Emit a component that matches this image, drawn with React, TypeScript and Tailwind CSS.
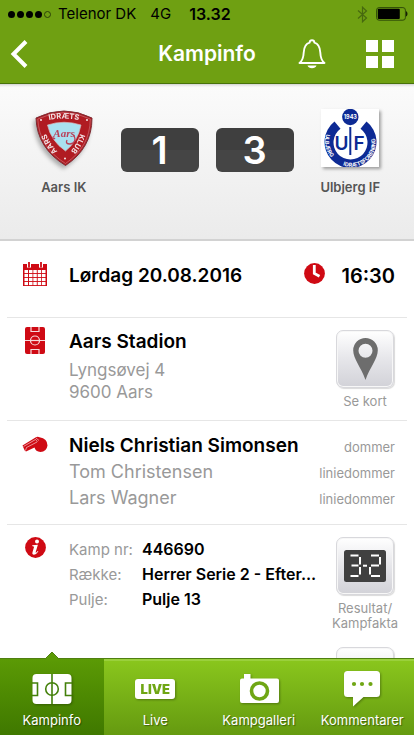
import type { ReactNode } from "react";

const red = "#cf0a14";

function BackIcon() {
  return (
    <svg width="18" height="28" viewBox="0 0 18 28" fill="none" stroke="#fff" strokeWidth="4">
      <path d="M16 1.500 3.500 14 16 26.500" />
    </svg>
  );
}

function BellIcon() {
  return (
    <svg width="28" height="30" viewBox="0 0 28 30" fill="none">
      <path
        d="M1.500 24C4.800 21.500 5.500 18 5.700 13.500C6 8 7.500 4.700 11.600 3.600C11.700 2.200 12.500 1.300 14 1.300s2.300.9 2.400 2.300c4.100 1.100 5.600 4.400 5.900 9.900.2 4.500.9 8 4.200 10.500z"
        stroke="#fff"
        strokeWidth="1.900"
        strokeLinejoin="round"
      />
      <path d="M9.500 26.600h9c-.6 1.800-2.300 2.700-4.500 2.700s-3.900-.9-4.500-2.700z" fill="#fff" />
    </svg>
  );
}

function GridIcon() {
  return (
    <svg width="28" height="28" viewBox="0 0 28 28" fill="#fff">
      <path d="M0 0h12v12H0zM16 0h12v12H16zM0 16h12v12H0zM16 16h12v12H16z" />
    </svg>
  );
}

function BluetoothIcon() {
  return (
    <svg width="11" height="17" viewBox="0 0 11 17" fill="none" stroke="#47690f" strokeWidth="1.200">
      <path d="M1 4.500 9.500 12 5.500 15.800V1.200L9.500 5 1 12.500" />
    </svg>
  );
}

function BatteryIcon() {
  return (
    <svg width="32" height="14" viewBox="0 0 32 14">
      <rect x=".6" y=".6" width="28.800" height="12.600" rx="2.500" fill="none" stroke="#2f4a08" />
      <rect x="1.800" y="1.800" width="22" height="10.200" rx="1" fill="#000" />
      <path d="M30.200 4.300c1.600.6 1.600 4.600 0 5.200z" fill="#000" />
    </svg>
  );
}

function AarsLogo() {
  return (
    <svg
      className="drop-shadow-[-2px_3px_2px_rgba(0,0,0,0.3)]"
      width="60"
      height="60"
      viewBox="0 0 60 60"
      role="img"
      aria-label="Aars IK"
    >
      <defs>
        <path id="aars-top" d="M9 13.500Q30 7.500 51 13.500" />
        <path id="aars-left" d="M27.500 47Q14 36 9.500 18" />
        <path id="aars-right" d="M48 18Q45 37 31 48.500" />
      </defs>
      <path d="M2 10Q30-4 58 10Q58 40 31.500 57.500Q3 40 2 10z" fill="#b01b22" stroke="#7d2c33" />
      <path d="M3.800 11Q30-1.800 56.300 11Q56 39 31.500 55.500Q5 39 3.800 11z" fill="none" stroke="#cf7d84" strokeWidth=".6" />
      <path d="M13.500 17Q30 11.500 47 17Q44 33 31.500 43Q17 33 13.500 17z" fill="#a9e0f0" stroke="#d5bcc0" strokeWidth=".7" />
      <g className="font-['Inter',sans-serif] font-bold" fill="#f2e2e4" fontSize="7.500">
        <text textAnchor="middle"><textPath href="#aars-top" startOffset="50%">IDRÆTS</textPath></text>
        <text textAnchor="middle"><textPath href="#aars-left" startOffset="46%">AARS</textPath></text>
        <text textAnchor="middle"><textPath href="#aars-right" startOffset="50%">KLUB</textPath></text>
      </g>
      <text x="30" y="29" textAnchor="middle" fontSize="11" fill="#b9425a" fontWeight="bold" className="font-['Liberation_Serif',serif] italic">
        Aars
      </text>
      <path d="M40 27q3 8-4 9-5 0-3-4M21 30q-2 2-2-1" fill="none" stroke="#b9425a" strokeWidth="1.300" />
      <g fill="#fff"><circle cx="7" cy="12" r=".9" /><circle cx="53" cy="12" r=".9" /><circle cx="31" cy="50.500" r=".9" /></g>
    </svg>
  );
}

function UlbjergLogo() {
  return (
    <svg
      className="bg-white shadow-[2px_2px_3px_rgba(0,0,0,0.35)]"
      width="58"
      height="58"
      viewBox="0 0 58 58"
      role="img"
      aria-label="Ulbjerg IF"
    >
      <defs>
        <path id="uif-left" d="M10.500 16A24.300 24.300 0 0 0 15.500 53" />
        <path id="uif-right" d="M18 54.500A24.300 24.300 0 0 0 53 25" />
      </defs>
      <path d="M13.500 12.500l6 7.300a17 17 0 1 0 20 0l6-7.300A26 26 0 1 1 13.500 12.500z" fill="#0d2a94" />
      <circle cx="29.300" cy="8" r="8.200" fill="#0d2a94" />
      <text x="29.300" y="10" textAnchor="middle" fontSize="5.500" fontWeight="bold" fill="#fff" className="font-['Inter',sans-serif]">
        1943
      </text>
      <g className="font-['Inter',sans-serif] font-bold" fill="#fff" fontSize="5.500">
        <text textAnchor="middle"><textPath href="#uif-left" startOffset="54%">ULBJERG</textPath></text>
        <text textAnchor="middle"><textPath href="#uif-right" startOffset="50%">IDRÆTSFORENING</textPath></text>
      </g>
      <g className="font-['Inter',sans-serif] font-semibold" fill="#0d2a94" fontSize="19" textAnchor="middle">
        <text x="20.500" y="41">U</text>
        <text x="38" y="41">F</text>
      </g>
      <path d="M29.300 18v28" stroke="#0d2a94" strokeWidth="2" />
    </svg>
  );
}

function CalendarIcon() {
  return (
    <svg width="24" height="24" viewBox="0 0 24 24">
      <path d="M0 2h24v22H0z" fill={red} />
      <g fill="#fff">
        {[8, 12, 16, 20].map((y) =>
          [1.5, 6, 10.3, 14.7, 19].map((x) => <rect key={`${x}-${y}`} x={x} y={y} width="3.500" height="3.100" />),
        )}
        <rect x="4" y="0" width="4" height="6" rx="1.500" />
        <rect x="16" y="0" width="4" height="6" rx="1.500" />
      </g>
      <path d="M6 .5v4.500M18 .5v4.500" stroke={red} strokeWidth="1.800" strokeLinecap="round" />
    </svg>
  );
}

function ClockIcon() {
  return (
    <svg width="21" height="21" viewBox="0 0 21 21">
      <circle cx="10.500" cy="10.500" r="10.400" fill={red} />
      <path d="M10.300 2v8.500l5.200 2.800" fill="none" stroke="#fff" strokeWidth="2.800" />
    </svg>
  );
}

function PitchIcon() {
  return (
    <svg width="20" height="27" viewBox="0 0 20 27">
      <rect width="20" height="27" rx="2" fill={red} />
      <g fill="none" stroke="#fff" strokeWidth="1.200" opacity=".85">
        <path d="M0 13.500h5.500M14.500 13.500H20M6 0v4.500h8V0M6 27v-4.500h8V27" />
        <circle cx="10" cy="13.500" r="4.500" />
        <path d="M5.500 13.500h9" />
      </g>
    </svg>
  );
}

function WhistleIcon() {
  return (
    <svg width="26" height="17" viewBox="0 0 26 17">
      <path
        d="M.5 9.500 13.500 1.500Q15.500.3 17.500 1.200Q25.500 2.500 25.500 9.500Q24.500 16 18.500 16Q13.500 15.500 12.500 11.500L4 15.500 2.700 14.500z"
        fill={red}
      />
      <path d="M1.500 10.500 13.500 3.500l2 2.300M3.500 14.500l1-3L15 6M14 2l3 2.500" fill="none" stroke="#fff" strokeWidth=".7" opacity=".8" />
    </svg>
  );
}

function InfoIcon() {
  return (
    <svg width="21" height="21" viewBox="0 0 21 21">
      <circle cx="10.500" cy="10.500" r="10.400" fill={red} />
      <circle cx="12" cy="4.500" r="2" fill="#fff" />
      <path d="M7.300 8.300l5.600-.6-2.200 7.200q-.2 1.100.6.600l1.500-1.400.6.500q-2.300 3.200-4.400 3.200-2.200-.2-1.500-2.600l1.600-5.500-1.900-.6z" fill="#fff" />
    </svg>
  );
}

function PinIcon() {
  return (
    <svg width="25" height="42" viewBox="0 0 25 42">
      <path
        fillRule="evenodd"
        d="M12.500 0A12.300 12.300 0 0 1 24.800 12.300C24.800 21 17 29 12.500 42 8 29 .2 21 .2 12.300A12.300 12.300 0 0 1 12.500 0zm0 5.700a7 7 0 1 0 0 14 7 7 0 0 0 0-14z"
        fill="#6d6d6d"
      />
    </svg>
  );
}

function ResultIcon() {
  return (
    <svg width="42" height="32" viewBox="0 0 42 32">
      <rect width="42" height="32" rx="2.500" fill="#404040" />
      <g fill="none" stroke="#fff" strokeWidth="2">
        <path d="M6.500 5.500h8M7.500 15.500h7M6.500 26h8M16 7v7.500M16 17v7.500" />
        <path d="M27 5.500h8M27 15.500h8M27 26h9M36 7v7.500M26 17v7.500" />
        <path d="M19 15.700h4" />
      </g>
    </svg>
  );
}

function TabPitchIcon() {
  return (
    <svg width="40" height="30" viewBox="0 0 40 30">
      <rect x=".5" width="39" height="30" rx="4" fill="#fff" />
      <g fill="none" stroke="#43800a" strokeWidth="1.600">
        <path d="M20 0v30M0 9h5.500v12.500H0M40 9h-6.500v12.500H40" />
        <circle cx="20" cy="15" r="6.300" />
      </g>
    </svg>
  );
}

function LiveIcon() {
  return (
    <span className="flex h-5 w-10 items-center justify-center rounded-[3px] bg-white text-[13px] leading-none font-black text-[#6fa614] text-shadow-none">
      LIVE
    </span>
  );
}

function CameraIcon() {
  return (
    <svg width="40" height="30" viewBox="0 0 40 30">
      <path d="M5 0h6.500v4.500H38q2 0 2 2V27q0 2-2 2H3q-2 0-2-2V6.500q0-2 2-2h2z" fill="#fff" />
      <circle cx="20.500" cy="17" r="8" fill="none" stroke="#6fa614" strokeWidth="3.600" />
    </svg>
  );
}

function CommentIcon() {
  return (
    <svg width="36" height="36" viewBox="0 0 36 36">
      <path d="M3.500 0h29Q36 0 36 3.500v19Q36 26 32.500 26H19.500L9 35.500V26H3.500Q0 26 0 22.500v-19Q0 0 3.500 0z" fill="#fff" />
      <g fill="#6fa614"><circle cx="10" cy="13" r="2.100" /><circle cx="18" cy="13" r="2.100" /><circle cx="26.500" cy="13" r="2.100" /></g>
    </svg>
  );
}

function Score({ value }: { value: number }) {
  return (
    <div className="mt-[31px] flex h-11 w-[78px] items-center justify-center rounded-md bg-linear-to-b from-[#3f3f3f] from-50% to-[#454545] to-50% text-[38px] font-semibold text-white">
      {value}
    </div>
  );
}

function Team({ name, children }: { name: string; children: ReactNode }) {
  return (
    <div className="flex flex-1 flex-col items-center pt-[11px]">
      <div className="flex h-[60px] items-center">{children}</div>
      <p className="mt-[9px] text-[13px] leading-5 font-semibold text-[#555]">{name}</p>
    </div>
  );
}

function Row({ icon, children, last }: { icon: ReactNode; children: ReactNode; last?: boolean }) {
  return (
    <section className={`mx-[7px] flex border-[#e6e6e6] ${last ? "" : "border-b"}`}>
      <div className="flex w-[62px] shrink-0 justify-center pr-[6px]">{icon}</div>
      {children}
    </section>
  );
}

function Tile({ label, children }: { label: string; children: ReactNode }) {
  return (
    <button className="flex w-[76px] flex-col items-center gap-[6px] text-[13px] leading-[15px] text-[#999]">
      <span className="flex size-[58px] items-center justify-center rounded-[7px] border border-[#d8d8dc] bg-linear-to-b from-white via-[#e6e6ea] via-50% to-[#d2d2d8] shadow-[inset_0_0_0_1px_#f7f7f7,1px_1px_1px_rgba(0,0,0,0.15)]">
        {children}
      </span>
      <span className="whitespace-pre-line">{label}</span>
    </button>
  );
}

const officials = [
  { name: "Tom Christensen", role: "liniedommer" },
  { name: "Lars Wagner", role: "liniedommer" },
];

const facts = [
  ["Kamp nr:", "446690"],
  ["Række:", "Herrer Serie 2 - Efter..."],
  ["Pulje:", "Pulje 13"],
];

const tabs = [
  { label: "Kampinfo", icon: <TabPitchIcon /> },
  { label: "Live", icon: <LiveIcon /> },
  { label: "Kampgalleri", icon: <CameraIcon /> },
  { label: "Kommentarer", icon: <CommentIcon /> },
];

export default function App() {
  return (
    <div className="flex h-screen flex-col overflow-hidden bg-white font-['Inter','Liberation_Sans',sans-serif] text-black">
      <header className="shrink-0 border-b border-[#47720a] bg-[#6fa012]">
        <div className="flex h-7 items-center pr-[6px] pl-2 text-[15px]">
          <div className="flex gap-[2px]">
            {[0, 1, 2, 3].map((dot) => (
              <span key={dot} className="size-[7px] rounded-full bg-black" />
            ))}
            <span className="size-[7px] rounded-full border border-[#2c4208]" />
          </div>
          <span className="ml-[7px]">Telenor DK</span>
          <span className="ml-[14px]">4G</span>
          <span className="ml-[18px] flex-1 text-base font-semibold">13.32</span>
          <BluetoothIcon />
          <span className="ml-2"><BatteryIcon /></span>
        </div>
        <div className="grid h-[55px] grid-cols-[1fr_auto_1fr] items-center pr-5 pb-1 pl-[10px]">
          <button aria-label="Tilbage" className="justify-self-start"><BackIcon /></button>
          <h1 className="pl-[10px] text-[21px] font-semibold text-white">Kampinfo</h1>
          <div className="flex items-center justify-end gap-10">
            <button aria-label="Notifikationer"><BellIcon /></button>
            <button aria-label="Menu"><GridIcon /></button>
          </div>
        </div>
      </header>

      <main className="min-h-0 flex-1 overflow-hidden">
        <section className="flex h-[157px] items-start border-b-2 border-[#d2d2d2] bg-linear-to-b from-[#fbfbfb] to-[#ebebeb] px-[7px] pt-[13px] shadow-[inset_0_4px_3px_-3px_rgba(0,0,0,0.2)]">
          <Team name="Aars IK"><AarsLogo /></Team>
          <Score value={1} />
          <div className="w-[17px]" />
          <Score value={3} />
          <Team name="Ulbjerg IF"><UlbjergLogo /></Team>
        </section>

        <Row icon={<div className="pt-[21px]"><CalendarIcon /></div>}>
          <div className="flex h-[76px] flex-1 items-start pt-[22px] pr-3 text-[19px] leading-[26px] font-semibold">
            <span className="flex-1">Lørdag 20.08.2016</span>
            <span className="mr-4"><ClockIcon /></span>
            <span className="text-[20px]">16:30</span>
          </div>
        </Row>

        <Row icon={<div className="pt-[9px]"><PitchIcon /></div>}>
          <div className="h-[102px] flex-1 pt-[11px]">
            <h2 className="text-[19px] leading-[26px] font-semibold">Aars Stadion</h2>
            <p className="mt-1 text-[17px] leading-[22px] text-[#999]">
              Lyngsøvej 4<br />9600 Aars
            </p>
          </div>
          <div className="pt-3 pr-1"><Tile label="Se kort"><PinIcon /></Tile></div>
        </Row>

        <Row icon={<div className="pt-[15px]"><WhistleIcon /></div>}>
          <div className="flex-1 pt-3 pr-3 pb-[13px] text-[18px] leading-[26px] text-[#999]">
            <div className="flex h-[26px] items-baseline justify-between">
              <h2 className="text-[19px] font-semibold text-black">Niels Christian Simonsen</h2>
              <span className="text-[13px]">dommer</span>
            </div>
            {officials.map((o) => (
              <div key={o.name} className="flex h-[26px] items-baseline justify-between">
                <span>{o.name}</span>
                <span className="text-[13px]">{o.role}</span>
              </div>
            ))}
          </div>
        </Row>

        <Row last icon={<div className="pt-3"><InfoIcon /></div>}>
          <dl className="min-w-0 flex-1 pt-3 text-[16px] leading-[25px]">
            {facts.map(([term, value]) => (
              <div key={term} className="flex h-[25px]">
                <dt className="w-[73px] shrink-0 text-[15px] text-[#999]">{term}</dt>
                <dd className="truncate font-semibold">{value}</dd>
              </div>
            ))}
          </dl>
          <div className="flex flex-col gap-4 pt-3 pr-1">
            <Tile label={"Resultat/\nKampfakta"}><ResultIcon /></Tile>
            <Tile label="">{null}</Tile>
          </div>
        </Row>
      </main>

      <nav className="grid h-[77px] shrink-0 grid-cols-4 border-t border-[#4f7f10] text-[13px] leading-4 text-white">
        {tabs.map((tab, i) => (
          <a
            key={tab.label}
            href="#"
            className={`relative flex flex-col items-center bg-linear-to-b pt-[9px] text-shadow-[1px_1px_1px_rgba(0,0,0,0.4)] ${
              i === 0
                ? "from-[#5b9a05] to-[#3f7800]"
                : "from-[#8ac71d] to-[#659a10] shadow-[inset_0_2px_0_#9ad03c]"
            }`}
          >
            {i === 0 && (
              <svg className="absolute -top-2 left-1/2 -translate-x-1/2" width="16" height="10" viewBox="0 0 16 10">
                <path d="M1 8.500 8 1l7 7.500V10H1z" fill="#5b9a05" />
                <path d="M1 8 8 1l7 7" fill="none" stroke="#4f7f10" />
              </svg>
            )}
            <span className="flex h-[42px] items-center drop-shadow-[1px_1px_1px_rgba(0,0,0,0.3)]">{tab.icon}</span>
            <span className="mt-[2px]">{tab.label}</span>
          </a>
        ))}
      </nav>
    </div>
  );
}
